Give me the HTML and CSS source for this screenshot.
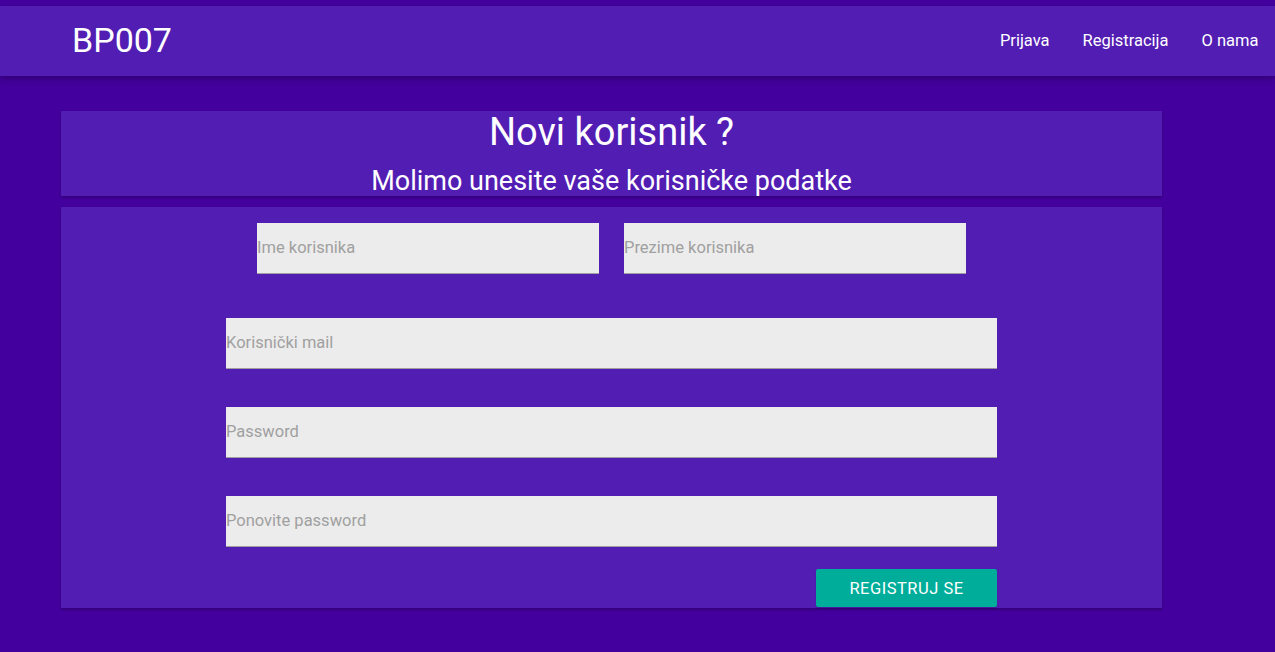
FILE: index.html
```html
<!DOCTYPE html>
<html lang="hr">
<head>
<meta charset="utf-8">
<title>BP007</title>
<link rel="stylesheet" href="styles.css">
</head>
<body>
<header class="topbar">
  <div class="brand">BP007</div>
  <nav class="nav">
    <a href="#">Prijava</a>
    <a href="#">Registracija</a>
    <a href="#">O nama</a>
  </nav>
</header>
<main class="content">
  <section class="card head-card">
    <h1 class="title">Novi korisnik ?</h1>
    <h2 class="subtitle">Molimo unesite vaše korisničke podatke</h2>
  </section>
  <section class="card form-card">
    <div class="row-two">
      <input class="field half" type="text" placeholder="Ime korisnika">
      <input class="field half" type="text" placeholder="Prezime korisnika">
    </div>
    <input class="field full mail" type="email" placeholder="Korisnički mail">
    <input class="field full pass" type="password" placeholder="Password">
    <input class="field full pass" type="password" placeholder="Ponovite password">
    <div class="actions">
      <button class="btn" type="button">Registruj se</button>
    </div>
  </section>
</main>
</body>
</html>
```
FILE: styles.css
```css
html, body {
  margin: 0;
  padding: 0;
}
body {
  background: #44009e;
  font-family: Roboto, "Liberation Sans", sans-serif;
  color: #fff;
  padding-top: 6px;
  min-height: 646px;
}
.topbar {
  height: 70px;
  background: #521db3;
  display: flex;
  align-items: center;
  justify-content: space-between;
  padding: 0 0 0 72px;
  box-shadow: 0 2px 4px rgba(0,0,0,0.16), 0 4px 10px rgba(0,0,0,0.14);
  position: relative;
}
.brand {
  font-size: 34px;
  line-height: 1;
  margin-top: -2px;
}
.nav {
  display: flex;
  margin-top: -2px;
}
.nav a {
  color: #fff;
  text-decoration: none;
  font-size: 16.5px;
  padding: 0 16.5px;
}
.content {
  margin: 35px 0 0 61px;
  width: 1101px;
}
.card {
  background: #521db3;
  box-shadow: 0 2px 2px rgba(0,0,0,0.14), 0 1px 4px rgba(0,0,0,0.12);
}
.head-card {
  height: 85px;
  text-align: center;
  box-sizing: border-box;
  margin-bottom: 11px;
}
.title {
  margin: 0;
  font-weight: 400;
  font-size: 38px;
  line-height: 42px;
}
.subtitle {
  margin: 13px 0 0;
  font-weight: 400;
  font-size: 27px;
  line-height: 30px;
}
.form-card {
  height: 401px;
  box-sizing: border-box;
  padding-top: 16px;
  display: flex;
  flex-direction: column;
  align-items: center;
}
.row-two {
  display: flex;
  gap: 25px;
}
.field {
  display: block;
  box-sizing: border-box;
  height: 51px;
  background: #ececec;
  border: none;
  border-bottom: 1px solid #9e9e9e;
  padding: 0 0 2px;
  margin: 0;
  font-family: Roboto, "Liberation Sans", sans-serif;
  font-size: 16.5px;
  color: #333;
  outline: none;
}
.field::placeholder {
  color: #a0a0a0;
  opacity: 1;
}
.half {
  width: 342px;
}
.full {
  width: 771px;
}
.mail {
  margin-top: 44px;
}
.pass {
  margin-top: 38px;
}
.actions {
  width: 771px;
  display: flex;
  justify-content: flex-end;
  margin-top: 22px;
}
.btn {
  width: 181px;
  height: 38px;
  background: #00ad9b;
  color: #fff;
  border: none;
  border-radius: 2px;
  font-family: Roboto, "Liberation Sans", sans-serif;
  font-size: 16.5px;
  text-transform: uppercase;
  letter-spacing: 0.5px;
  box-shadow: 0 2px 2px rgba(0,0,0,0.14);
  padding: 0;
}
```
